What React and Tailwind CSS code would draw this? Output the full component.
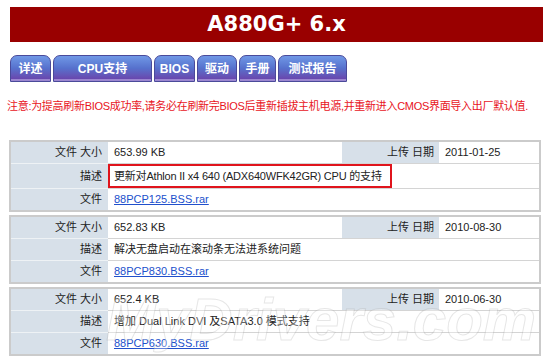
import React from "react";

const tabs = [
  { name: "详述", w: "w-[41px]" },
  { name: "CPU支持", w: "w-[99px]" },
  { name: "BIOS", w: "w-[41px]" },
  { name: "驱动", w: "w-[40px]" },
  { name: "手册", w: "w-[37px]" },
  { name: "测试报告", w: "w-[69px]" },
];

const files = [
  {
    size: "653.99 KB",
    date: "2011-01-25",
    desc: "更新对Athlon II x4 640 (ADX640WFK42GR) CPU 的支持",
    file: "88PCP125.BSS.rar",
    marked: true,
  },
  {
    size: "652.83 KB",
    date: "2010-08-30",
    desc: "解决无盘启动在滚动条无法进系统问题",
    file: "88PCP830.BSS.rar",
  },
  {
    size: "652.4 KB",
    date: "2010-06-30",
    desc: "增加  Dual Link DVI 及SATA3.0 模式支持",
    file: "88PCP630.BSS.rar",
  },
];

function Tab({ name, w }) {
  return (
    <div
      className={`${w} h-[27px] rounded-t-[7px] border border-[#4a4a9a] bg-linear-to-b from-[#7098e6] via-[#5670cc] to-[#6a3ea8] flex items-center justify-center text-white font-bold text-[12px] shadow-[inset_0_-2px_0_#9b86d0]`}
    >
      {name}
    </div>
  );
}

function FileBlock({ item }) {
  return (
    <div className="w-[532px] border-2 border-[#cbcbcb] grid grid-cols-[97px_234px_97px_100px] text-[11px] text-[#222]">
      <div className="h-[21px] bg-[#d7e0e9] flex items-center justify-end pr-[6px]">文件 大小</div>
      <div className="h-[21px] flex items-center pl-[6px]">{item.size}</div>
      <div className="h-[21px] bg-[#d7e0e9] flex items-center justify-end pr-[5px]">上传 日期</div>
      <div className="h-[21px] flex items-center pl-[6px]">{item.date}</div>

      <div className="border-t border-[#eef2f5] bg-[#d7e0e9] flex items-center justify-end pr-[6px]">描述</div>
      <div className="col-span-3 border-t border-[#d4d4d4] flex items-center">
        {item.marked ? (
          <div className="h-[24px] border-2 border-[#e0141c] flex items-center pl-[4px] pr-[8px] tracking-[-0.2px]">
            {item.desc}
          </div>
        ) : (
          <div className="h-[21px] flex items-center pl-[6px]">{item.desc}</div>
        )}
      </div>

      <div className="h-[22px] border-t border-[#eef2f5] bg-[#d7e0e9] flex items-center justify-end pr-[6px]">文件</div>
      <div className="h-[22px] col-span-3 border-t border-[#d4d4d4] flex items-center pl-[6px]">
        <a href="#" className="text-[#2150cc] underline">{item.file}</a>
      </div>
    </div>
  );
}

export default function App() {
  return (
    <div className="w-[550px] h-[363px] bg-white relative overflow-hidden font-['Liberation_Sans','Noto_Sans_CJK_SC',sans-serif]">
      <div className="ml-[10px] mt-[7px] w-[533px] h-[35px] bg-[#990000] flex items-center justify-center text-white font-bold text-[21px] font-['DejaVu_Sans','Noto_Sans_CJK_SC',sans-serif]">
        A880G+ 6.x
      </div>

      <div className="ml-[10px] mt-[13px] flex gap-[2px]">
        {tabs.map((t) => (
          <Tab key={t.name} name={t.name} w={t.w} />
        ))}
      </div>

      <p className="ml-[7px] mt-[17px] text-[11px] tracking-[-0.3px] text-[#e8141c] leading-[14px]">
        注意:为提高刷新BIOS成功率,请务必在刷新完BIOS后重新插拔主机电源,并重新进入CMOS界面导入出厂默认值.
      </p>

      <div className="ml-[9px] mt-[27px] flex flex-col gap-[3px]">
        {files.map((f) => (
          <FileBlock key={f.file} item={f} />
        ))}
      </div>

      <div className="absolute left-[106px] top-[290px] pointer-events-none italic font-bold text-[60px] leading-none text-white/30 [-webkit-text-stroke:1px_rgba(140,140,140,0.22)] font-['Liberation_Sans',sans-serif]">
        MyDrivers.com
      </div>
    </div>
  );
}
